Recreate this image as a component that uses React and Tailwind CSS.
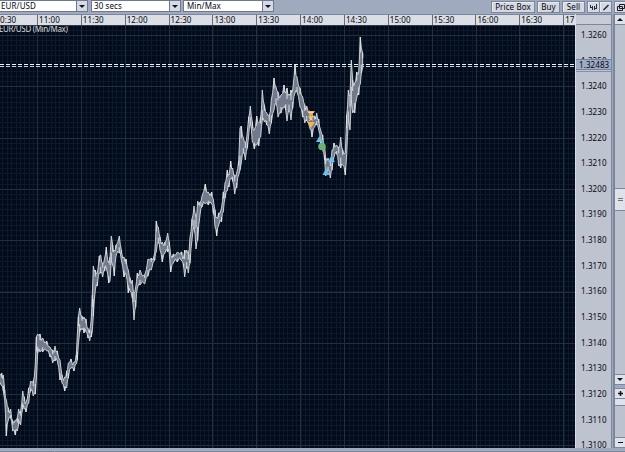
import { useMemo } from "react";

// [x, high, low] in chart pixels
const RANGES = [
  [-1, 374, 387], [1.7, 373, 386], [3.3, 375, 391], [4.7, 390, 400], [6.3, 400, 436], [8.3, 408, 420],
  [10.7, 409, 418], [12.7, 421, 431], [15.3, 420, 435], [17.3, 418, 431], [18.7, 409, 424], [20.7, 411, 425],
  [22.7, 391, 409], [24.3, 397, 409], [26, 402, 412], [28.7, 388, 403], [30.7, 381, 391], [33.3, 381, 396],
  [35.3, 364, 394], [36.3, 337, 380], [37.7, 334, 353], [40, 334, 352], [42.7, 338, 352], [46.7, 341, 351],
  [50, 347, 357], [52.7, 350, 363], [55, 346, 361], [57.3, 351, 361], [60, 360, 380], [62, 375, 383],
  [64.7, 377, 391], [66.7, 371, 388], [68.3, 363, 378], [71, 359, 368], [74, 362, 371], [76.3, 355, 364],
  [77.3, 335, 360], [78.3, 317, 345], [79.7, 308, 332], [82, 316, 330], [84, 317, 333], [86, 319, 332],
  [88, 328, 338], [89.7, 330, 341], [91.3, 318, 337], [92.3, 295, 331], [93.3, 266, 316], [95.3, 270, 290],
  [97.3, 273, 286], [99.3, 256, 273], [100.7, 255, 273], [102.7, 263, 277], [104.7, 258, 271], [106.3, 247, 268],
  [108.7, 263, 283], [110, 257, 281], [111.3, 236, 261], [112.7, 245, 265], [114.3, 250, 276], [116, 245, 256],
  [119.3, 236, 253], [121.3, 250, 260], [124, 257, 277], [126, 259, 274], [128.3, 270, 293], [130, 278, 291],
  [132.3, 280, 298], [134, 293, 320], [135.7, 287, 307], [137.3, 273, 288], [140, 270, 285], [144.7, 275, 284],
  [148, 259, 276], [151.3, 258, 270], [154.7, 253, 260], [156.3, 221, 252], [158.3, 227, 243], [160, 237, 250],
  [162.3, 242, 262], [165, 242, 253], [167.7, 233, 252], [169.3, 242, 254], [170.7, 255, 272], [173.3, 254, 263],
  [177.3, 252, 262], [181.7, 252, 261], [183.7, 257, 267], [184.7, 250, 277], [186.7, 250, 268], [188.3, 253, 273],
  [190, 237, 263], [192, 219, 240], [194, 206, 227], [196, 217, 249], [197.7, 201, 240], [200, 202, 215],
  [202, 196, 207], [205.3, 184, 204], [208.3, 192, 205], [211.7, 192, 204], [213.3, 199, 213], [215, 210, 227],
  [216.7, 217, 236], [218.7, 213, 225], [221.5, 208, 222], [223.3, 192, 212], [225, 183, 198], [227.3, 170, 191],
  [229, 175, 187], [230.7, 161, 179], [232.7, 168, 181], [234.7, 175, 194], [236.7, 173, 188], [238.7, 161, 175],
  [240, 128, 170], [241.3, 126, 163], [243.3, 138, 153], [245.3, 142, 160], [247.3, 132, 148], [248.7, 117, 135],
  [250.3, 106, 123], [252.3, 122, 142], [254.3, 130, 149], [256.7, 116, 145], [258.7, 123, 146], [260.7, 117, 137],
  [262.3, 90, 120], [264.3, 105, 122], [266.7, 113, 125], [269.3, 115, 134], [271.3, 100, 123], [274, 78, 110],
  [276, 87, 104], [278, 92, 117], [281, 95, 113], [284, 85, 108], [285.7, 93, 110], [287, 88, 121],
  [289, 94, 110], [291, 90, 120], [292.7, 90, 108], [295, 65, 93], [297, 77, 92], [300, 88, 107],
  [302.7, 97, 117], [304.8, 105, 123], [306.7, 106, 121], [310, 111, 129], [312, 114, 137], [314.7, 116, 127],
  [316.7, 113, 125], [318.7, 119, 130], [320.7, 130, 143], [322.7, 135, 150], [324.7, 147, 160], [325.7, 158, 176],
  [328, 158, 171], [330.3, 160, 178], [332, 150, 170], [334, 143, 157], [336.7, 145, 154], [338.7, 147, 166],
  [340.7, 137, 168], [342.7, 150, 165], [345.3, 153, 175], [346.7, 115, 155], [348.3, 90, 122], [350, 95, 130],
  [351.3, 60, 100], [352.7, 80, 113], [354.7, 83, 113], [356.7, 72, 98], [358.7, 72, 95], [360.3, 37, 84],
  [361.3, 48, 73], [362.7, 53, 68],
];

const CHART_TOP = 26;

const TIMES = [
  "11:00", "11:30", "12:00", "12:30", "13:00", "13:30",
  "14:00", "14:30", "15:00", "15:30", "16:00", "16:30",
];

const PRICES = [
  "1.3260", "1.3250", "1.3240", "1.3230", "1.3220", "1.3210", "1.3200", "1.3190", "1.3180",
  "1.3170", "1.3160", "1.3150", "1.3140", "1.3130", "1.3120", "1.3110", "1.3100",
];

const range = (n) => Array.from({ length: n }, (_, i) => i);

// adds a shallow dip between neighbouring samples so the band edges stay jagged
const withDips = (ranges) =>
  ranges.flatMap(([x, high, low], i) => {
    const next = ranges[i + 1];
    if (!next) return [[x, high, low]];
    const gap = next[0] - x;
    if (gap < 1.5) return [[x, high, low]];
    const dip = 1.5 + ((i * 7) % 4);
    return [
      [x, high, low],
      [x + gap / 2, (high + next[1]) / 2 + dip, (low + next[2]) / 2 - (4.5 - dip / 2)],
    ];
  });

const Arrow = ({ up }) => (
  <svg width="6" height="3" viewBox="0 0 6 3">
    <path d={up ? "M0 3h6L3 0z" : "M0 0h6L3 3z"} fill="#10141c" />
  </svg>
);

const Select = ({ value, className }) => (
  <div className={`flex h-3 border border-[#6d7890] bg-white ${className}`}>
    <span className="min-w-0 flex-1 leading-[10px]">{value}</span>
    <span className="flex w-[11px] items-center justify-center border-l border-[#6d7890] bg-[#d5dae4]">
      <Arrow />
    </span>
  </div>
);

const ToolButton = ({ children, className }) => (
  <button
    type="button"
    className={`flex h-3 items-center justify-center border border-[#7c879d] bg-[#d3d8e1] shadow-[inset_1px_1px_0_#e9ecf1] ${className}`}
  >
    {children}
  </button>
);

const Toolbar = () => (
  <div className="flex h-[14px] shrink-0 bg-[#a0aabe]">
    <Select value="EUR/USD" className="w-[88px] border-l-0 pl-px" />
    <Select value="30 secs" className="ml-[3px] w-[90px] pl-[2px]" />
    <Select value="Min/Max" className="ml-[2px] w-[91px] pl-[3px]" />
    <div className="ml-auto flex pt-px">
      <ToolButton className="w-[44px]">Price Box</ToolButton>
      <ToolButton className="ml-[2px] w-[23px]">Buy</ToolButton>
      <ToolButton className="ml-[2px] w-[23px]">Sell</ToolButton>
      <ToolButton className="ml-[2px] w-[13px]">
        <svg width="8" height="7" viewBox="0 0 8 7" fill="none" stroke="#252b38">
          <path d="M.5 1v3M2.500 2v4M4.500 2v4M6.500 0v5M1 3.500h2M4 4.500h2" />
        </svg>
      </ToolButton>
      <ToolButton className="w-[12px] border-l-0">
        <svg width="8" height="7" viewBox="0 0 8 7" stroke="#151a24" strokeWidth="1.300">
          <path d="M1.500 6l5-5" />
        </svg>
      </ToolButton>
      <ToolButton className="ml-[2px] w-[11px] border-r-0">
        <svg width="9" height="9" viewBox="0 0 9 9" fill="#d3d8e1" stroke="#151a24">
          <path d="M3.500 1.500h5v4h-5zM1.500 3.500h5v4h-5z" />
        </svg>
      </ToolButton>
    </div>
  </div>
);

const TimeAxis = () => (
  <div className="flex h-[11px] w-[575px] overflow-hidden border-t border-[#7c879d] bg-[#dbdee5] leading-[10px]">
    <span className="w-[37px] shrink-0">0:30</span>
    {TIMES.map((t) => (
      <span key={t} className="w-[43.85px] shrink-0 border-l border-[#646d7e] pl-px">
        {t}
      </span>
    ))}
    <span className="shrink-0 border-l border-[#646d7e] pl-px">17</span>
  </div>
);

const Markers = () => (
  <g>
    <path d="M307 111h8l-4 5zM308 116h6l-3 5zM307 122h8l-4 6z" fill="#f0b552" />
    <path d="M308 112.500h6M309 117.500l4 3M309 121l3-4" stroke="#f6dc9f" strokeWidth=".8" />
    <path d="M316 142l3.500-6 3.500 6z" fill="#67c0f0" />
    <circle cx="322" cy="146.500" r="3.800" fill="#6bb072" />
    <path d="M328 162l3.500-6.500 3.500 6.500zM322.500 175l3.500-7 4 7z" fill="#67c0f0" />
  </g>
);

const PriceChart = () => {
  const { area, strokes } = useMemo(() => {
    const samples = withDips(RANGES);
    const highs = samples.map(([x, high]) => `${x},${high}`);
    const lows = samples.map(([x, , low]) => `${x},${low}`).reverse();
    // alternate high/low ticks run inside the band
    const ticks = RANGES.map(([x, high, low], i) => {
      const third = (low - high) / 3;
      return i % 2 ? `M${x} ${high}v${third}` : `M${x} ${low}v${-third}`;
    }).join("");
    return {
      area: `M${highs.join("L")}L${lows.join("L")}Z`,
      strokes: ticks,
    };
  }, []);

  return (
    <svg
      width="575"
      height="422"
      viewBox={`0 ${CHART_TOP} 575 422`}
      className="block shrink-0 bg-[#020b1b]"
    >
      <g stroke="#0d1828" shapeRendering="crispEdges">
        {range(132).map((i) => (
          <path key={i} d={`M${Math.round(-2 + i * 4.385) + 0.5} 26V448`} />
        ))}
        {range(84).map((i) => (
          <path key={i} d={`M0 ${Math.round(24.7 + i * 5.13) + 0.5}H575`} />
        ))}
      </g>
      <g stroke="#252e3c" shapeRendering="crispEdges">
        {range(13).map((i) => (
          <path key={i} d={`M${Math.round(37 + i * 43.85) + 0.5} 26V448`} />
        ))}
        {range(9).map((i) => (
          <path key={i} d={`M0 ${Math.round(35 + i * 51.3) + 0.5}H575`} />
        ))}
      </g>
      <g strokeDasharray="4 2" shapeRendering="crispEdges">
        <path d="M0 64.500H575" stroke="#eef4fa" />
        <path d="M0 66.500H575" stroke="#c2d0e2" />
      </g>
      <path d={area} fill="#717a8c" stroke="#d9dce0" strokeWidth=".9" />
      <path d={strokes} stroke="#e6e8ea" strokeWidth=".9" />
      <Markers />
      <text x="-1" y="32" fill="#d6d9de" fontSize="8" textLength="69" lengthAdjust="spacing">
        EUR/USD (Min/Max)
      </text>
    </svg>
  );
};

const PriceAxis = () => (
  <div className="relative w-9 shrink-0 overflow-hidden border-l border-[#d9dee7] bg-[#bec3d0]">
    <div className="h-[11px] border-y border-[#7c879d] bg-[#c8ccd6]" />
    <div className="flex flex-col pt-[5px]">
      {PRICES.map((p) => (
        <span key={p} className="h-[25.65px] shrink-0 pl-[5px] leading-[10px]">
          {p}
        </span>
      ))}
    </div>
    <div className="absolute inset-x-0 top-[45px] h-[11px] border-y border-[#7483a0] bg-[#9eacc6] pl-[3px] leading-[9px]">
      1.32483
    </div>
    <div className="absolute inset-x-0 top-[57px] h-px bg-[#8490a6]" />
  </div>
);

const ScrollButton = ({ children }) => (
  <div className="flex h-[11px] shrink-0 items-center justify-center border-y border-[#7c879d] bg-[#dfe2e8]">
    {children}
  </div>
);

const ScrollColumn = () => (
  <div className="flex w-[11px] shrink-0 flex-col border-l border-[#7c879d] bg-[#bdc2cf]">
    <ScrollButton>
      <Arrow up />
    </ScrollButton>
    <div className="h-[163px]" />
    <div className="flex h-[23px] flex-col items-center justify-center gap-px border-y border-[#7c879d] bg-[#dfe2e8]">
      <span className="h-px w-[5px] bg-[#6b7588]" />
      <span className="h-px w-[5px] bg-[#6b7588]" />
    </div>
    <div className="flex-1" />
    <ScrollButton>
      <Arrow />
    </ScrollButton>
    <div className="h-[3px] bg-[#a0aabe]" />
    <ScrollButton>
      <svg width="5" height="5" stroke="#10141c" strokeWidth="1.500">
        <path d="M0 2.500h5M2.500 0v5" />
      </svg>
    </ScrollButton>
    <div className="h-[7px] border-b border-[#7c879d] bg-[#dfe2e8]" />
    <div className="h-[31px]" />
    <ScrollButton>
      <span className="h-px w-[5px] bg-[#10141c]" />
    </ScrollButton>
  </div>
);

const App = () => (
  <div className="flex h-[452px] w-[625px] flex-col overflow-hidden bg-[#a0aabe] font-['Noto_Sans','DejaVu_Sans',sans-serif] text-[8px] tracking-[0.1px] text-[#05070c]">
    <Toolbar />
    <div className="flex h-[434px] shrink-0">
      <div className="flex w-[575px] flex-col">
        <TimeAxis />
        <div className="h-px shrink-0 bg-[#30394a]" />
        <PriceChart />
      </div>
      <PriceAxis />
      <div className="w-[3px] border-x border-[#7c879d] bg-[#a0aabe]" />
      <ScrollColumn />
    </div>
    <div className="flex h-1 pt-[3px]">
      <span className="w-[54px] bg-[#7c879d]" />
      <span className="ml-px flex-1 bg-[#7c879d]" />
    </div>
  </div>
);

export default App;
